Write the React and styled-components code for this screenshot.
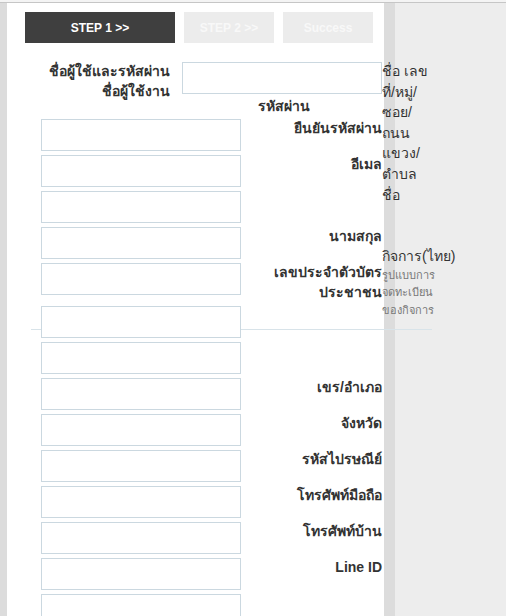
import styled, { createGlobalStyle } from 'styled-components'

const GlobalStyle = createGlobalStyle`
  html, body {
    margin: 0;
    padding: 0;
    background: #f4f4f4;
  }
  body {
    font-family: Tahoma, "Liberation Sans", "Noto Sans", sans-serif;
    color: #333;
  }
`

const Page = styled.div`
  display: flex;
  margin-top: 2px;
  height: 613px;
  border-top: 1px solid #c6c6c6;
  background: #ededed;
  overflow: hidden;
`

const Strip = styled.div`
  flex: 0 0 ${p => p.$w}px;
  background: #dcdcdc;
`

const Panel = styled.div`
  position: relative;
  z-index: 1;
  flex: 0 0 377px;
  min-width: 0;
  background: #fff;
`

const StepBar = styled.div`
  display: flex;
  gap: 9px;
  margin: 9px 0 0 18px;
`

const Step = styled.div`
  width: ${p => p.$w}px;
  height: 31px;
  display: flex;
  align-items: center;
  justify-content: center;
  background: ${p => (p.$active ? '#3f3f3f' : '#ececec')};
  color: ${p => (p.$active ? '#fff' : '#f8f8f8')};
  font-size: 12px;
  font-weight: bold;
`

const Body = styled.div`
  display: flex;
  width: 460px;
  margin-top: 19px;
`

const FormCol = styled.div`
  flex: 0 0 375px;
`

const HeaderRow = styled.div`
  display: flex;
  align-items: flex-start;
  height: 32px;
`

const HeaderLabel = styled.div`
  width: 163px;
  margin-right: 12px;
  margin-top: -1px;
  text-align: right;
  font-size: 14px;
  font-weight: bold;
  line-height: 20px;
`

const Input = styled.input`
  position: relative;
  display: block;
  box-sizing: border-box;
  width: 200px;
  height: 32px;
  margin: 0;
  border: 1px solid #cbd8e0;
  background: #fff;
  outline: none;
`

const PasswordLabel = styled.div`
  height: 25px;
  line-height: 25px;
  padding-right: 72px;
  text-align: right;
  font-size: 14px;
  font-weight: bold;
`

const Rows = styled.div`
  margin-left: 34px;
`

const Row = styled.div`
  position: relative;
  display: flex;
  align-items: flex-start;
  margin-bottom: 4px;

  ${p => p.$rule && `
    &::before {
      content: "";
      position: absolute;
      left: -10px;
      top: 23px;
      width: 401px;
      height: 1px;
      background: #d8e3e9;
    }
  `}
`

const RowLabel = styled.div`
  width: 141px;
  margin-top: -1px;
  text-align: right;
  font-size: 14px;
  font-weight: bold;
  line-height: 20px;
`

const AddressCol = styled.div`
  flex: 0 0 70px;
  margin-top: -1px;
  font-size: 14px;
  line-height: 20.6px;
  color: #333;
  white-space: nowrap;
`

const Line = styled.div`
  height: 20.6px;
`

const SmallLine = styled.div`
  font-size: 11px;
  line-height: 17.5px;
  color: #777;
`

const rows = [
  { label: 'ยืนยันรหัสผ่าน' },
  { label: 'อีเมล' },
  { label: '' },
  { label: 'นามสกุล' },
  { label: ['เลขประจำตัวบัตร', 'ประชาชน'] },
  { label: '', rule: true },
  { label: '' },
  { label: 'เขร/อำเภอ' },
  { label: 'จังหวัด' },
  { label: 'รหัสไปรษณีย์' },
  { label: 'โทรศัพท์มือถือ' },
  { label: 'โทรศัพท์บ้าน' },
  { label: 'Line ID' },
  { label: '' },
]

const addressLines = ['ชื่อ เลข', 'ที่/หมู่/', 'ซอย/', 'ถนน', 'แขวง/', 'ตำบล', 'ชื่อ', '', '', 'กิจการ(ไทย)']
const smallLines = ['รูปแบบการ', 'จดทะเบียน', 'ของกิจการ']

const App = () => {
  return (
    <>
      <GlobalStyle />
      <Page>
        <Strip $w={7} />
        <Panel>
          <StepBar>
            <Step $w={150} $active>STEP 1 &gt;&gt;</Step>
            <Step $w={90}>STEP 2 &gt;&gt;</Step>
            <Step $w={90}>Success</Step>
          </StepBar>
          <Body>
            <FormCol>
              <HeaderRow>
                <HeaderLabel>
                  ชื่อผู้ใช้และรหัสผ่าน<br />ชื่อผู้ใช้งาน
                </HeaderLabel>
                <Input type="text" />
              </HeaderRow>
              <PasswordLabel>รหัสผ่าน</PasswordLabel>
              <Rows>
                {rows.map((r, i) => (
                  <Row key={i} $rule={r.rule}>
                    <Input type="text" />
                    <RowLabel>
                      {Array.isArray(r.label)
                        ? r.label.map((l, j) => <div key={j}>{l}</div>)
                        : r.label}
                    </RowLabel>
                  </Row>
                ))}
              </Rows>
            </FormCol>
            <AddressCol>
              {addressLines.map((l, i) => (
                <Line key={i}>{l}</Line>
              ))}
              {smallLines.map((l, i) => (
                <SmallLine key={i}>{l}</SmallLine>
              ))}
            </AddressCol>
          </Body>
        </Panel>
        <Strip $w={11} />
      </Page>
    </>
  )
}

export default App
